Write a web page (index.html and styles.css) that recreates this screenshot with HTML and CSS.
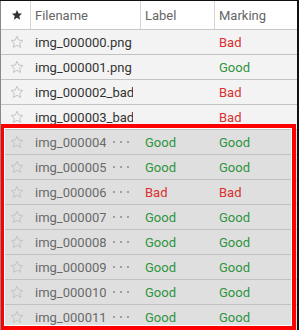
FILE: index.html
```html
<!DOCTYPE html>
<html lang="en">
<head>
    <meta charset="UTF-8">
    <title>Images</title>
    <link rel="stylesheet" href="styles.css">
</head>
<body>
    <svg width="0" height="0" class="defs">
        <defs>
            <path id="star" d="M7 1.2 L8.7 5.1 L12.9 5.5 L9.7 8.3 L10.7 12.5 L7 10.3 L3.3 12.5 L4.3 8.3 L1.1 5.5 L5.3 5.1 Z"/>
        </defs>
    </svg>
    <div class="panel">
        <div class="row head">
            <div class="cell star"><svg class="star-full" width="14" height="14" viewBox="0 0 14 14"><use href="#star"/></svg></div>
            <div class="cell">Filename</div>
            <div class="cell">Label</div>
            <div class="cell">Marking</div>
        </div>

        <div class="row">
            <div class="cell star"><svg class="star-empty" width="14" height="14" viewBox="0 0 14 14"><use href="#star"/></svg></div>
            <div class="cell name"><span class="clip wide">img_000000.png</span></div>
            <div class="cell"></div>
            <div class="cell bad">Bad</div>
        </div>
        <div class="row">
            <div class="cell star"><svg class="star-empty" width="14" height="14" viewBox="0 0 14 14"><use href="#star"/></svg></div>
            <div class="cell name"><span class="clip wide">img_000001.png</span></div>
            <div class="cell"></div>
            <div class="cell good">Good</div>
        </div>
        <div class="row">
            <div class="cell star"><svg class="star-empty" width="14" height="14" viewBox="0 0 14 14"><use href="#star"/></svg></div>
            <div class="cell name"><span class="clip wide">img_000002_bad.png</span></div>
            <div class="cell"></div>
            <div class="cell bad">Bad</div>
        </div>
        <div class="row">
            <div class="cell star"><svg class="star-empty" width="14" height="14" viewBox="0 0 14 14"><use href="#star"/></svg></div>
            <div class="cell name"><span class="clip wide">img_000003_bad.png</span></div>
            <div class="cell"></div>
            <div class="cell bad">Bad</div>
        </div>

        <div class="selected">
            <div class="row sel">
                <div class="cell star"><svg class="star-empty" width="14" height="14" viewBox="0 0 14 14"><use href="#star"/></svg></div>
                <div class="cell name"><span class="clip">img_000004.png</span><span class="dots"><i></i><i></i><i></i></span></div>
                <div class="cell good">Good</div>
                <div class="cell good">Good</div>
            </div>
            <div class="row sel">
                <div class="cell star"><svg class="star-empty" width="14" height="14" viewBox="0 0 14 14"><use href="#star"/></svg></div>
                <div class="cell name"><span class="clip">img_000005.png</span><span class="dots"><i></i><i></i><i></i></span></div>
                <div class="cell good">Good</div>
                <div class="cell good">Good</div>
            </div>
            <div class="row sel">
                <div class="cell star"><svg class="star-empty" width="14" height="14" viewBox="0 0 14 14"><use href="#star"/></svg></div>
                <div class="cell name"><span class="clip">img_000006_bad.png</span><span class="dots"><i></i><i></i><i></i></span></div>
                <div class="cell bad">Bad</div>
                <div class="cell bad">Bad</div>
            </div>
            <div class="row sel">
                <div class="cell star"><svg class="star-empty" width="14" height="14" viewBox="0 0 14 14"><use href="#star"/></svg></div>
                <div class="cell name"><span class="clip">img_000007.png</span><span class="dots"><i></i><i></i><i></i></span></div>
                <div class="cell good">Good</div>
                <div class="cell good">Good</div>
            </div>
            <div class="row sel">
                <div class="cell star"><svg class="star-empty" width="14" height="14" viewBox="0 0 14 14"><use href="#star"/></svg></div>
                <div class="cell name"><span class="clip">img_000008.png</span><span class="dots"><i></i><i></i><i></i></span></div>
                <div class="cell good">Good</div>
                <div class="cell good">Good</div>
            </div>
            <div class="row sel">
                <div class="cell star"><svg class="star-empty" width="14" height="14" viewBox="0 0 14 14"><use href="#star"/></svg></div>
                <div class="cell name"><span class="clip">img_000009.png</span><span class="dots"><i></i><i></i><i></i></span></div>
                <div class="cell good">Good</div>
                <div class="cell good">Good</div>
            </div>
            <div class="row sel">
                <div class="cell star"><svg class="star-empty" width="14" height="14" viewBox="0 0 14 14"><use href="#star"/></svg></div>
                <div class="cell name"><span class="clip">img_000010.png</span><span class="dots"><i></i><i></i><i></i></span></div>
                <div class="cell good">Good</div>
                <div class="cell good">Good</div>
            </div>
            <div class="row sel">
                <div class="cell star"><svg class="star-empty" width="14" height="14" viewBox="0 0 14 14"><use href="#star"/></svg></div>
                <div class="cell name"><span class="clip">img_000011.png</span><span class="dots"><i></i><i></i><i></i></span></div>
                <div class="cell good">Good</div>
                <div class="cell good">Good</div>
            </div>
            <div class="highlight"></div>
        </div>
    </div>
</body>
</html>
```

FILE: styles.css
```css
body {
    margin: 0;
    background: #111;
    font-family: Roboto, sans-serif;
    font-size: 13px;
    height: 330px;
    overflow: hidden;
}

.defs {
    position: absolute;
}

.panel {
    margin: 1px 2px 0 0;
    border-left: 1px solid #888;
    background: #f3f3f3;
    height: 329px;
    overflow: hidden;
}

.row {
    display: grid;
    grid-template-columns: 30px 110px 74px 1fr;
    height: 25px;
    border-bottom: 1px solid #c2c2c2;
    box-sizing: border-box;
    color: #333;
}

.row.head {
    height: 29px;
    background: #fff;
    color: #666;
    border-bottom: 1px solid #c8c8c8;
}

.cell {
    display: flex;
    align-items: center;
    padding-left: 4px;
    white-space: nowrap;
    overflow: hidden;
    box-sizing: border-box;
}

.row.head .cell {
    border-right: 1px solid #d4d4d4;
}

.row.head .cell:last-child {
    border-right: none;
}

.cell.star {
    justify-content: center;
    padding-left: 2px;
}

.star-full {
    fill: #333;
    width: 12px;
    height: 12px;
}

.star-empty {
    fill: none;
    stroke: #c4c4c4;
    stroke-width: 1;
}

.good {
    color: #2e9440;
}

.bad {
    color: #d93030;
}

.selected {
    position: relative;
}

.row.sel {
    background: #dfdfdf;
    color: #6a6a6a;
}

.clip {
    width: 71px;
    overflow: hidden;
    flex-shrink: 0;
}

.clip.wide {
    width: 98px;
}

.dots {
    display: flex;
    gap: 5px;
    margin-left: 7px;
}

.dots i {
    width: 2px;
    height: 2px;
    border-radius: 50%;
    background: #8a8a8a;
}

.highlight {
    position: absolute;
    left: -1px;
    top: -6px;
    width: 296px;
    height: 206px;
    border: 4px solid #ff0000;
    box-shadow: inset 0 0 0 1px #fff;
    box-sizing: border-box;
    pointer-events: none;
}
```
